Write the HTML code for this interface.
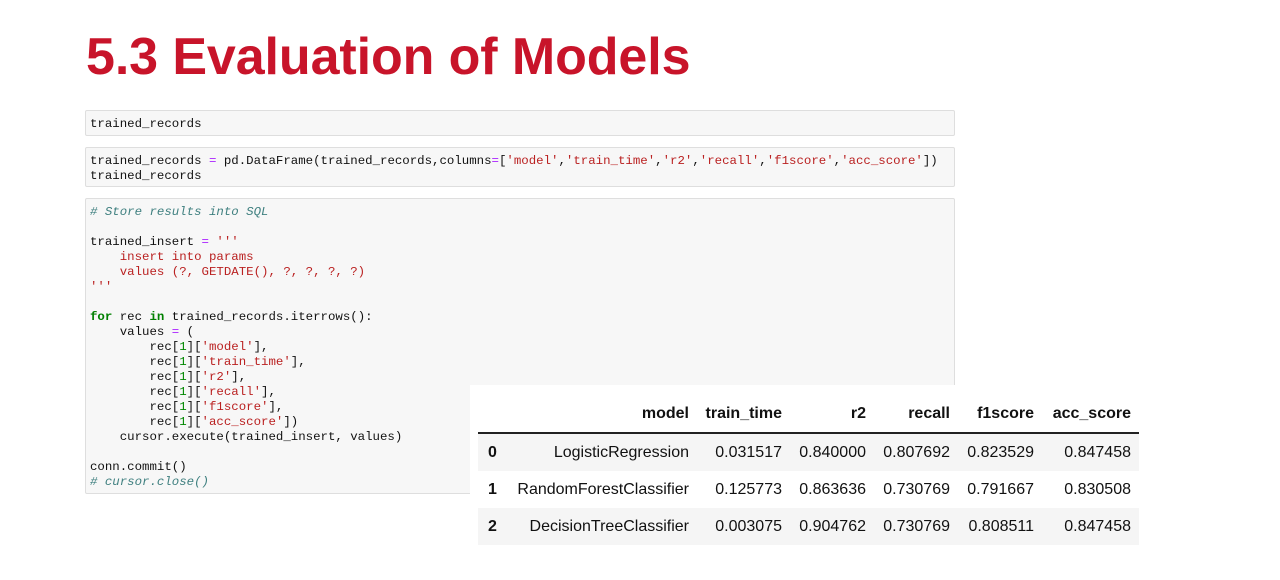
<!DOCTYPE html>
<html><head><meta charset="utf-8"><style>
body{margin:0;width:1280px;height:580px;background:#fff;position:relative;overflow:hidden;font-family:"Liberation Sans",sans-serif}
h1{position:absolute;left:86px;top:27px;margin:0;font-size:52px;font-weight:bold;color:#c8142a;letter-spacing:-0.1px;line-height:60px}
.cell{position:absolute;left:85px;width:870px;background:#f7f7f7;border:1px solid #dedede;border-radius:2px;font-family:"Liberation Mono",monospace;font-size:12.4px;line-height:15px;color:#111;white-space:pre;padding:0 0 0 4px;box-sizing:border-box}
.s{color:#ba2121}.k{color:#008000;font-weight:bold}.c{color:#408080;font-style:italic}.n{color:#080}.o{color:#aa22ff}
.tbl{position:absolute;left:470px;top:385px;width:680px;height:170px;background:#fff}
table{position:absolute;left:8px;top:10px;border-collapse:collapse;font-size:16px;color:#111}
td,th{text-align:right;padding:0;height:37px}
th{font-weight:bold}
thead th{height:37px;border-bottom:2px solid #222}
tr.z td, tr.z th{background:#f5f5f5}
</style></head><body>
<h1>5.3 Evaluation of Models</h1>
<div class="cell" style="top:110px;height:26px;padding-top:6px">trained_records</div>
<div class="cell" style="top:147px;height:40px;padding-top:6px">trained_records <span class="o">=</span> pd.DataFrame(trained_records,columns<span class="o">=</span>[<span class="s">'model'</span>,<span class="s">'train_time'</span>,<span class="s">'r2'</span>,<span class="s">'recall'</span>,<span class="s">'f1score'</span>,<span class="s">'acc_score'</span>])
trained_records</div>
<div class="cell" style="top:198px;height:296px;padding-top:6px"><span class="c"># Store results into SQL</span>

trained_insert <span class="o">=</span> <span class="s">'''
    insert into params
    values (?, GETDATE(), ?, ?, ?, ?)
'''</span>

<span class="k">for</span> rec <span class="k">in</span> trained_records.iterrows():
    values <span class="o">=</span> (
        rec[<span class="n">1</span>][<span class="s">'model'</span>],
        rec[<span class="n">1</span>][<span class="s">'train_time'</span>],
        rec[<span class="n">1</span>][<span class="s">'r2'</span>],
        rec[<span class="n">1</span>][<span class="s">'recall'</span>],
        rec[<span class="n">1</span>][<span class="s">'f1score'</span>],
        rec[<span class="n">1</span>][<span class="s">'acc_score'</span>])
    cursor.execute(trained_insert, values)

conn.commit()
<span class="c"># cursor.close()</span></div>
<div class="tbl"><table>
<colgroup><col style="width:30px"><col style="width:181px"><col style="width:93px"><col style="width:84px"><col style="width:84px"><col style="width:84px"><col style="width:105px"></colgroup>
<thead><tr><th></th><th>model</th><th>train_time</th><th>r2</th><th>recall</th><th>f1score</th><th style="padding-right:8px">acc_score</th></tr></thead>
<tbody>
<tr class="z"><th style="text-align:left;padding-left:10px">0</th><td>LogisticRegression</td><td>0.031517</td><td>0.840000</td><td>0.807692</td><td>0.823529</td><td style="padding-right:8px">0.847458</td></tr>
<tr><th style="text-align:left;padding-left:10px">1</th><td>RandomForestClassifier</td><td>0.125773</td><td>0.863636</td><td>0.730769</td><td>0.791667</td><td style="padding-right:8px">0.830508</td></tr>
<tr class="z"><th style="text-align:left;padding-left:10px">2</th><td>DecisionTreeClassifier</td><td>0.003075</td><td>0.904762</td><td>0.730769</td><td>0.808511</td><td style="padding-right:8px">0.847458</td></tr>
</tbody></table></div>
</body></html>
